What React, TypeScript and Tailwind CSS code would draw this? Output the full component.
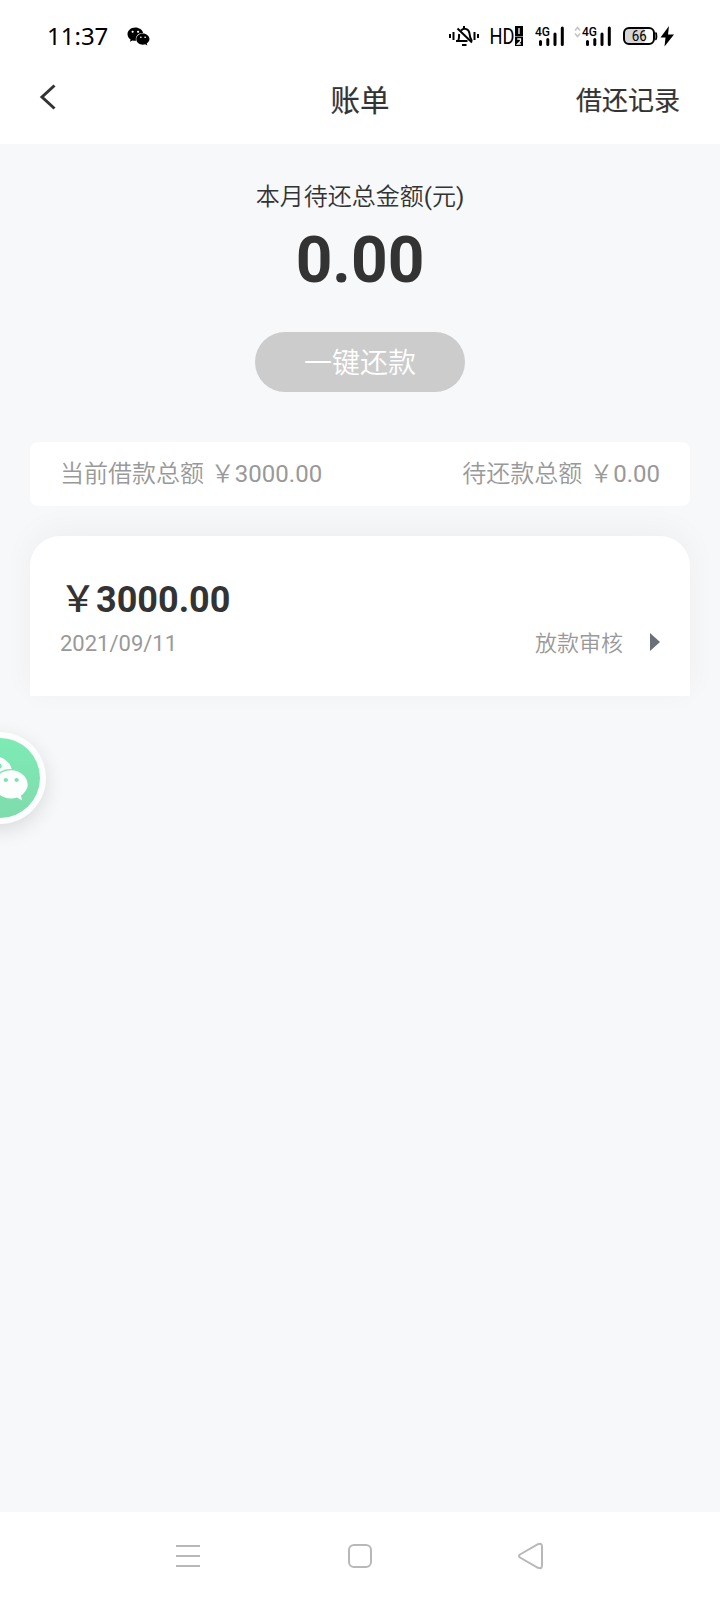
import { FaWeixin } from 'react-icons/fa'

const cjk = "font-['Roboto','Noto_Sans_CJK_SC',sans-serif]"
// full-width yen sign
const YEN = '\uFFE5'

const MuteIcon = () => (
  <svg width="32" height="24" viewBox="448 24 32 24" fill="none" stroke="#000" strokeWidth="2">
    <path d="M450 34v4M453.500 32v8M474.500 32v8M478 34v4" />
    <path d="M464 26v2.500M456 41h11.500M458 41c1.500-2.500.8-5 1.200-7M461 30.500c3.500-3.300 8-1.500 8.500 3 .2 3 .6 5 2.500 7.500" />
    <path d="M457.500 28.500l14.500 14M462 45h4.500" />
  </svg>
)

const HdIcon = () => (
  <div className="flex h-[22px] w-[35px] items-center">
    <svg className="overflow-visible" width="27" height="22" fontFamily="Roboto">
      <text x="1.500" y="19" fontSize="22" textLength="25" lengthAdjust="spacingAndGlyphs">HD</text>
    </svg>
    <svg width="8" height="22" stroke="#fff" strokeWidth="1.300" fill="none">
      <path d="M0 1h8v10H0zM0 11.500h8V21H0z" fill="#000" stroke="none" />
      <path d="M4 3v6M2.200 14h3.300v2.300l-3 2.700h3.300" />
    </svg>
  </div>
)

const Signal = () => (
  <svg className="overflow-visible" width="30" height="22" stroke="#000" strokeWidth="3" strokeLinecap="round">
    <text x="0" y="11" fontFamily="Roboto" fontSize="13.500" fontWeight="500" stroke="none" textLength="15" lengthAdjust="spacingAndGlyphs">4G</text>
    <path d="M5.500 16.500v3M12.800 14.500v5M20 9v10.500M27.300 3v16.500" />
  </svg>
)

const StatusBar = () => (
  <div className="flex h-[72px] items-center pl-[47px] text-black">
    <span className="w-[80px] pb-[1px] font-['Noto_Sans'] text-[24px] leading-none">11:37</span>
    <FaWeixin className="h-[23px] w-[23px]" />
    <div className="ml-[298px] flex items-center">
      <MuteIcon />
      <div className="ml-[8px]"><HdIcon /></div>
      <div className="ml-[12px]"><Signal /></div>
      <svg className="ml-[9px]" width="7" height="22" fill="none" stroke="#c4c4c4" strokeWidth="1.600">
        <path d="M1 5.500l2.500-3L6 5.500M1 8.500l2.500 3L6 8.500" />
      </svg>
      <div className="ml-[1px]"><Signal /></div>
      <svg className="ml-[10px]" width="54" height="22" viewBox="622 25 54 22">
        <rect x="624" y="28" width="21" height="16" rx="4" fill="#d5d5d5" />
        <rect x="624" y="28" width="30" height="16" rx="5" fill="none" stroke="#000" strokeWidth="2" />
        <path d="M655.500 32.500c1.500.8 1.500 6.500 0 7.500" stroke="#000" strokeWidth="1.500" />
        <text x="639.300" y="41.200" textAnchor="middle" fontFamily="Roboto" fontSize="14.500" textLength="15" lengthAdjust="spacingAndGlyphs">66</text>
        <path d="M669 26l-8.500 11.500h5l-1 9L674 34.500h-6z" />
      </svg>
    </div>
  </div>
)

const Header = () => (
  <header className="relative flex h-[72px] items-start justify-center text-[#333]">
    <svg className="absolute top-[11px] left-[36px]" width="24" height="28" fill="none" stroke="#333" strokeWidth="3">
      <path d="M18.500 2.500L6 14l12.500 11.500" />
    </svg>
    <h1 className="pt-[13px] text-[29.500px] leading-[32px] [-webkit-text-stroke:0.2px]">账单</h1>
    <span className="absolute top-[15px] right-[40px] text-[26px] leading-[28px] [-webkit-text-stroke:0.2px]">借还记录</span>
  </header>
)

const Summary = () => (
  <section className="flex flex-col items-center">
    <p className="mt-[37px] text-[24px] leading-[32px] text-[#333]">
      <span className="font-[350]">本月待还总金额</span>(<span className="font-[350]">元</span>)
    </p>
    <p className="mt-[11px] text-[64px] leading-[74px] font-bold text-[#333]">0.00</p>
    <button className="mt-[34px] h-[60px] w-[210px] rounded-full bg-[#ccc] pt-[4px] text-[28px] leading-[56px] font-[350] text-white">一键还款</button>
  </section>
)

const Totals = () => (
  <div className="mx-[30px] mt-[50px] flex h-[64px] items-center justify-between rounded-lg bg-white px-[30px] text-[24px] leading-[32px] [word-spacing:1px] text-[#999]">
    <span><span className="font-[350]">当前借款总额 {YEN}</span>3000.00</span>
    <span><span className="font-[350]">待还款总额 {YEN}</span>0.00</span>
  </div>
)

const BillCard = () => (
  <div className="mx-[30px] mt-[30px] h-[160px] rounded-t-[30px] bg-white px-[30px] pt-[43px] shadow-[0_-6px_32px_rgba(0,0,0,0.045)]">
    <p className="h-[42px] text-[36px] leading-[42px] font-bold text-[#333]"><span className="font-medium">{YEN}</span>3000.00</p>
    <div className="mt-[7px] flex h-[32px] items-center justify-between text-[22px] leading-[32px] text-[#999]">
      <span>2021/09/11</span>
      <div className="flex items-center">
        <span className="font-[350]">放款审核</span>
        <svg className="mb-[4px] ml-[27px]" width="10" height="18" fill="#6b7078">
          <path d="M0 0l10 9-10 9z" />
        </svg>
      </div>
    </div>
  </div>
)

const NavBar = () => (
  <nav className="h-[88px] bg-white">
    <svg width="720" height="88" fill="none" stroke="#b8b8b8" strokeWidth="2">
      <path d="M176 34h24M176 44h24M176 54h24" />
      <rect x="349" y="33" width="22" height="22" rx="5" />
      <path d="M520 42.500l17.500-10q4.500-2 4.500 2v19q0 4-4.500 2l-17.500-10q-2-1.500 0-3z" />
    </svg>
  </nav>
)

export default function App() {
  return (
    <div className={`relative flex h-[1600px] w-[720px] flex-col overflow-hidden bg-[#f7f8fa] ${cjk}`} lang="zh-CN">
      <div className="bg-white">
        <StatusBar />
        <Header />
      </div>
      <main className="flex-1">
        <Summary />
        <Totals />
        <BillCard />
      </main>
      <NavBar />
      {/* floating WeChat contact button */}
      <div className="absolute top-[732px] -left-[46px] flex h-[92px] w-[92px] items-center justify-center rounded-full bg-[#fcfefd] shadow-[0_6px_20px_rgba(0,0,0,0.12)]">
        <div className="flex h-[80px] w-[80px] items-center justify-center rounded-full bg-linear-to-b from-[#7debb5] to-[#80dbac]">
          <FaWeixin className="h-[60px] w-[58px] shrink-0 text-[#fcfefd]" />
        </div>
      </div>
    </div>
  )
}
